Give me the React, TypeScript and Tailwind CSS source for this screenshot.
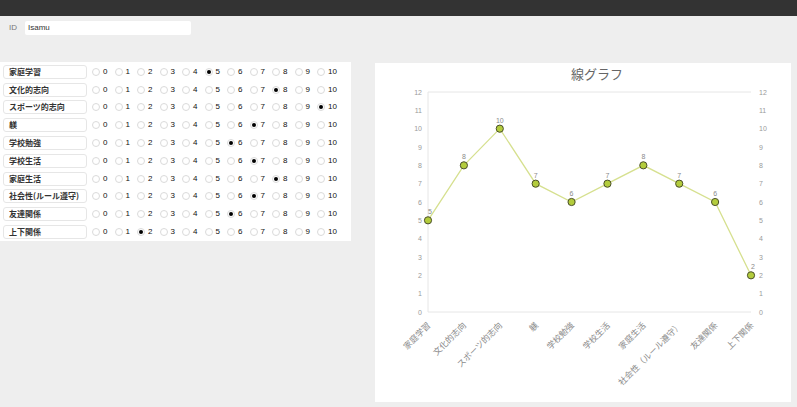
import React from "react";

const rows: { label: string; chartLabel: string; value: number }[] = [
  { label: "家庭学習", chartLabel: "家庭学習", value: 5 },
  { label: "文化的志向", chartLabel: "文化的志向", value: 8 },
  { label: "スポーツ的志向", chartLabel: "スポーツ的志向", value: 10 },
  { label: "躾", chartLabel: "躾", value: 7 },
  { label: "学校勉強", chartLabel: "学校勉強", value: 6 },
  { label: "学校生活", chartLabel: "学校生活", value: 7 },
  { label: "家庭生活", chartLabel: "家庭生活", value: 8 },
  { label: "社会性(ルール遵守)", chartLabel: "社会性（ルール遵守）", value: 7 },
  { label: "友達関係", chartLabel: "友達関係", value: 6 },
  { label: "上下関係", chartLabel: "上下関係", value: 2 },
];

function Chart() {
  const x0 = 53;
  const x1 = 376;
  const yTop = 29;
  const yBot = 249;
  const step = (x1 - x0) / 9;
  const py = (v: number) => yBot - (v / 12) * (yBot - yTop);
  const pts = rows.map((r, i) => [x0 + i * step, py(r.value)] as const);
  const ticks = Array.from({ length: 13 }, (_, i) => i);
  return (
    <svg width="416" height="339" viewBox="0 0 416 339" className="block">
      <text
        x="222"
        y="16"
        textAnchor="middle"
        fontSize="13"
        fill="#666"
        fontFamily="'Noto Sans CJK JP', sans-serif"
      >
        線グラフ
      </text>
      <line x1={x0} y1={yTop} x2={x1} y2={yTop} stroke="#e6e6e6" strokeWidth="1" />
      <line x1={x0} y1={yTop} x2={x0} y2={yBot} stroke="#e6e6e6" strokeWidth="1" />
      <line x1={x0} y1={yBot} x2={x1} y2={yBot} stroke="#e6e6e6" strokeWidth="1" />
      {ticks.map((t) => (
        <g key={t} fontSize="7" fill="#9a9a9a" fontFamily="'Liberation Sans', sans-serif">
          <text x="47" y={py(t) + 2.5} textAnchor="end">
            {t}
          </text>
          <text x="384" y={py(t) + 2.5} textAnchor="start">
            {t}
          </text>
        </g>
      ))}
      <polyline
        points={pts.map((p) => p.join(",")).join(" ")}
        fill="none"
        stroke="#d6e08f"
        strokeWidth="1.3"
      />
      {pts.map(([x, y], i) => (
        <g key={i}>
          <text
            x={i === 0 || i === 9 ? x + 2 : x}
            y={y - 6}
            textAnchor="middle"
            fontSize="7"
            fill="#8a8a8a"
            fontFamily="'Liberation Sans', sans-serif"
          >
            {rows[i].value}
          </text>
          <circle cx={x} cy={y} r="3.6" fill="#b3cc3c" stroke="#4a4f2a" strokeWidth="1" />
        </g>
      ))}
      {rows.map((r, i) => {
        const x = x0 + i * step + 3;
        const y = 263;
        return (
          <text
            key={i}
            x={x}
            y={y}
            textAnchor="end"
            fontSize="8.5"
            fill="#8a8a8a"
            fontFamily="'Noto Sans CJK JP', sans-serif"
            transform={`rotate(-45 ${x} ${y})`}
          >
            {r.chartLabel}
          </text>
        );
      })}
    </svg>
  );
}

export default function App() {
  return (
    <div
      className="w-[797px] h-[407px] bg-[#eeeeee] overflow-hidden flex flex-col"
      style={{ fontFamily: "'Liberation Sans', 'Noto Sans CJK JP', sans-serif" }}
    >
      <div className="h-[16px] bg-[#333333] shrink-0" />
      <div className="flex items-center h-[14px] mt-[5px]">
        <span className="text-[8px] text-[#777] ml-[9px] w-[16px]">ID</span>
        <div className="w-[166px] h-[14px] bg-white rounded-[2px] flex items-center pl-[3px] text-[8px] text-[#333]">
          Isamu
        </div>
      </div>
      <div className="flex items-start mt-[27px]">
        <div className="w-[351px] h-[179px] bg-white pt-[1px] flex flex-col">
          {rows.map((r) => (
            <div key={r.label} className="h-[17.8px] flex items-center">
              <div
                className="ml-[3px] w-[84px] h-[14px] border border-[#e6e6e6] rounded-[3px] flex items-center pl-[5px] text-[8px] font-bold text-[#333] whitespace-nowrap overflow-hidden"
                style={{ fontFamily: "'Noto Sans CJK JP', sans-serif" }}
              >
                {r.label}
              </div>
              <div className="flex ml-[5px]">
                {Array.from({ length: 11 }, (_, i) => (
                  <div key={i} className="w-[22.5px] flex items-center">
                    <span className="w-[8px] h-[8px] rounded-full border border-[#dadada] flex items-center justify-center">
                      {r.value === i && <span className="w-[4px] h-[4px] rounded-full bg-black" />}
                    </span>
                    <span className="ml-[3px] text-[8px] text-[#111] leading-none">{i}</span>
                  </div>
                ))}
              </div>
            </div>
          ))}
        </div>
        <div className="ml-[24px] mt-[1px] w-[416px] h-[339px] bg-white">
          <Chart />
        </div>
      </div>
    </div>
  );
}
